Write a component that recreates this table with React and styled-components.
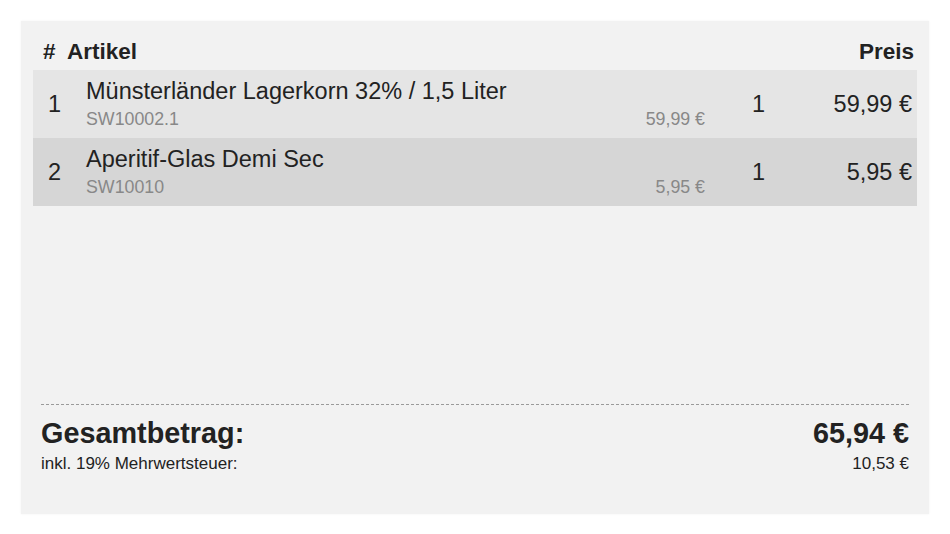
import React from "react";
import styled, { createGlobalStyle } from "styled-components";

const items = [
  { pos: 1, name: "Münsterländer Lagerkorn 32% / 1,5 Liter", sku: "SW10002.1", unit: "59,99 €", qty: 1, total: "59,99 €" },
  { pos: 2, name: "Aperitif-Glas Demi Sec", sku: "SW10010", unit: "5,95 €", qty: 1, total: "5,95 €" },
];

const GlobalStyle = createGlobalStyle`
  html, body {
    margin: 0;
    padding: 0;
    background: #ffffff;
  }
  body {
    font-family: "Liberation Sans", Arial, sans-serif;
    color: #222222;
  }
`;

const Page = styled.div`
  padding: 21px 21px 20px 21px;
`;

const Panel = styled.div`
  width: 908px;
  height: 493px;
  background: #f2f2f2;
  box-shadow: 0 0 2px rgba(0, 0, 0, 0.06);
  display: flex;
  flex-direction: column;
  box-sizing: border-box;
  padding: 0 12px 0 12px;
`;

const HeaderRow = styled.div`
  display: flex;
  align-items: flex-end;
  height: 49px;
  padding-bottom: 5px;
  box-sizing: border-box;
  font-size: 22.5px;
  font-weight: 700;
`;

const HeadHash = styled.span`
  width: 34px;
  padding-left: 10px;
  box-sizing: border-box;
`;

const HeadTitle = styled.span`
  flex: 1;
`;

const HeadPrice = styled.span`
  padding-right: 3px;
`;

const Row = styled.div`
  display: flex;
  align-items: center;
  height: 68px;
  background: ${(p) => (p.$alt ? "#d6d6d6" : "#e5e5e5")};
`;

const PosCell = styled.div`
  width: 53px;
  padding-left: 15px;
  box-sizing: border-box;
  font-size: 23.5px;
`;

const ArticleCell = styled.div`
  flex: 1;
  display: flex;
  flex-direction: column;
  gap: 4px;
`;

const ArticleName = styled.div`
  font-size: 23.5px;
`;

const ArticleMeta = styled.div`
  display: flex;
  justify-content: space-between;
  font-size: 17.8px;
  color: #888888;
`;

const QtyCell = styled.div`
  width: 78px;
  padding-left: 47px;
  box-sizing: border-box;
  font-size: 23.5px;
`;

const PriceCell = styled.div`
  width: 134px;
  text-align: right;
  padding-right: 5px;
  box-sizing: border-box;
  font-size: 23.5px;
`;

const Footer = styled.div`
  margin-top: auto;
  margin-bottom: 40px;
  padding: 0 8px;
`;

const Divider = styled.div`
  border-top: 1px dashed #9a9a9a;
  margin-bottom: 12px;
`;

const TotalRow = styled.div`
  display: flex;
  justify-content: space-between;
  align-items: baseline;
  font-size: 28.8px;
  font-weight: 700;
`;

const TaxRow = styled.div`
  display: flex;
  justify-content: space-between;
  font-size: 17px;
  margin-top: 4px;
`;

export default function App() {
  return (
    <Page>
      <GlobalStyle />
      <Panel>
        <HeaderRow>
          <HeadHash>#</HeadHash>
          <HeadTitle>Artikel</HeadTitle>
          <HeadPrice>Preis</HeadPrice>
        </HeaderRow>
        {items.map((item, i) => (
          <Row key={item.sku} $alt={i % 2 === 1}>
            <PosCell>{item.pos}</PosCell>
            <ArticleCell>
              <ArticleName>{item.name}</ArticleName>
              <ArticleMeta>
                <span>{item.sku}</span>
                <span>{item.unit}</span>
              </ArticleMeta>
            </ArticleCell>
            <QtyCell>{item.qty}</QtyCell>
            <PriceCell>{item.total}</PriceCell>
          </Row>
        ))}
        <Footer>
          <Divider />
          <TotalRow>
            <span>Gesamtbetrag:</span>
            <span>65,94 €</span>
          </TotalRow>
          <TaxRow>
            <span>inkl. 19% Mehrwertsteuer:</span>
            <span>10,53 €</span>
          </TaxRow>
        </Footer>
      </Panel>
    </Page>
  );
}
